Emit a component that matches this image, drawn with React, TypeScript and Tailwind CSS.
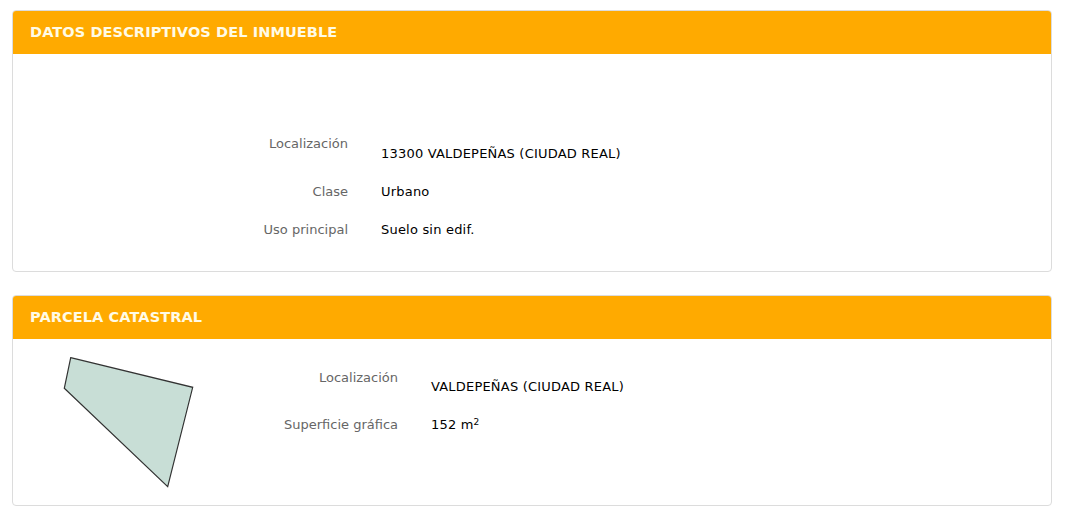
const font = { fontFamily: '"DejaVu Sans", Verdana, sans-serif' };

function Row({ label, value, shift, labelWidth }: { label: string; value: React.ReactNode; shift?: string; labelWidth: string }) {
  return (
    <div className="flex items-start">
      <div className={`${labelWidth} shrink-0 text-right text-[13px] leading-4 text-[#666]`}>{label}</div>
      <div className={`ml-[33px] text-[13px] leading-4 tracking-[0.2px] text-black ${shift ?? ''}`}>{value}</div>
    </div>
  );
}

function Panel({ title, children }: { title: string; children: React.ReactNode }) {
  return (
    <section className="ml-3 w-[1040px] overflow-hidden rounded-[4px] border border-[#dcdcdc] bg-white">
      <header className="flex h-[43px] items-center bg-[#ffaa00] px-[17px]">
        <h2 className="text-[14.5px] font-bold tracking-[0.1px] text-[#fffbe6]">{title}</h2>
      </header>
      {children}
    </section>
  );
}

export default function App() {
  return (
    <main className="min-h-[521px] bg-white pt-[10px]" style={font}>
      <Panel title="DATOS DESCRIPTIVOS DEL INMUEBLE">
        <div className="flex flex-col gap-y-[22px] pb-[33px] pt-[82px]">
          <Row labelWidth="w-[335px]" label="Localización" value="13300 VALDEPEÑAS (CIUDAD REAL)" shift="mt-[10px]" />
          <Row labelWidth="w-[335px]" label="Clase" value="Urbano" />
          <Row labelWidth="w-[335px]" label="Uso principal" value="Suelo sin edif." />
        </div>
      </Panel>

      <div className="h-[23px]" />

      <Panel title="PARCELA CATASTRAL">
        <div className="flex h-[166px]">
          <div className="w-[200px] shrink-0 pl-[47px] pt-[15px]">
            <svg width="136" height="136" viewBox="0 0 136 136">
              <polygon
                points="10.7,3.7 132.7,33.3 107.7,132.7 4.3,34.3"
                fill="#c8ded6"
                stroke="#333"
                strokeWidth="1.2"
              />
            </svg>
          </div>
          <div className="flex flex-col gap-y-[22px] pt-[31px]">
            <Row labelWidth="w-[185px]" label="Localización" value="VALDEPEÑAS (CIUDAD REAL)" shift="mt-[9px]" />
            <Row
              labelWidth="w-[185px]"
              label="Superficie gráfica"
              value={
                <span>
                  152 m<sup className="text-[9px]">2</sup>
                </span>
              }
            />
          </div>
        </div>
      </Panel>
    </main>
  );
}
